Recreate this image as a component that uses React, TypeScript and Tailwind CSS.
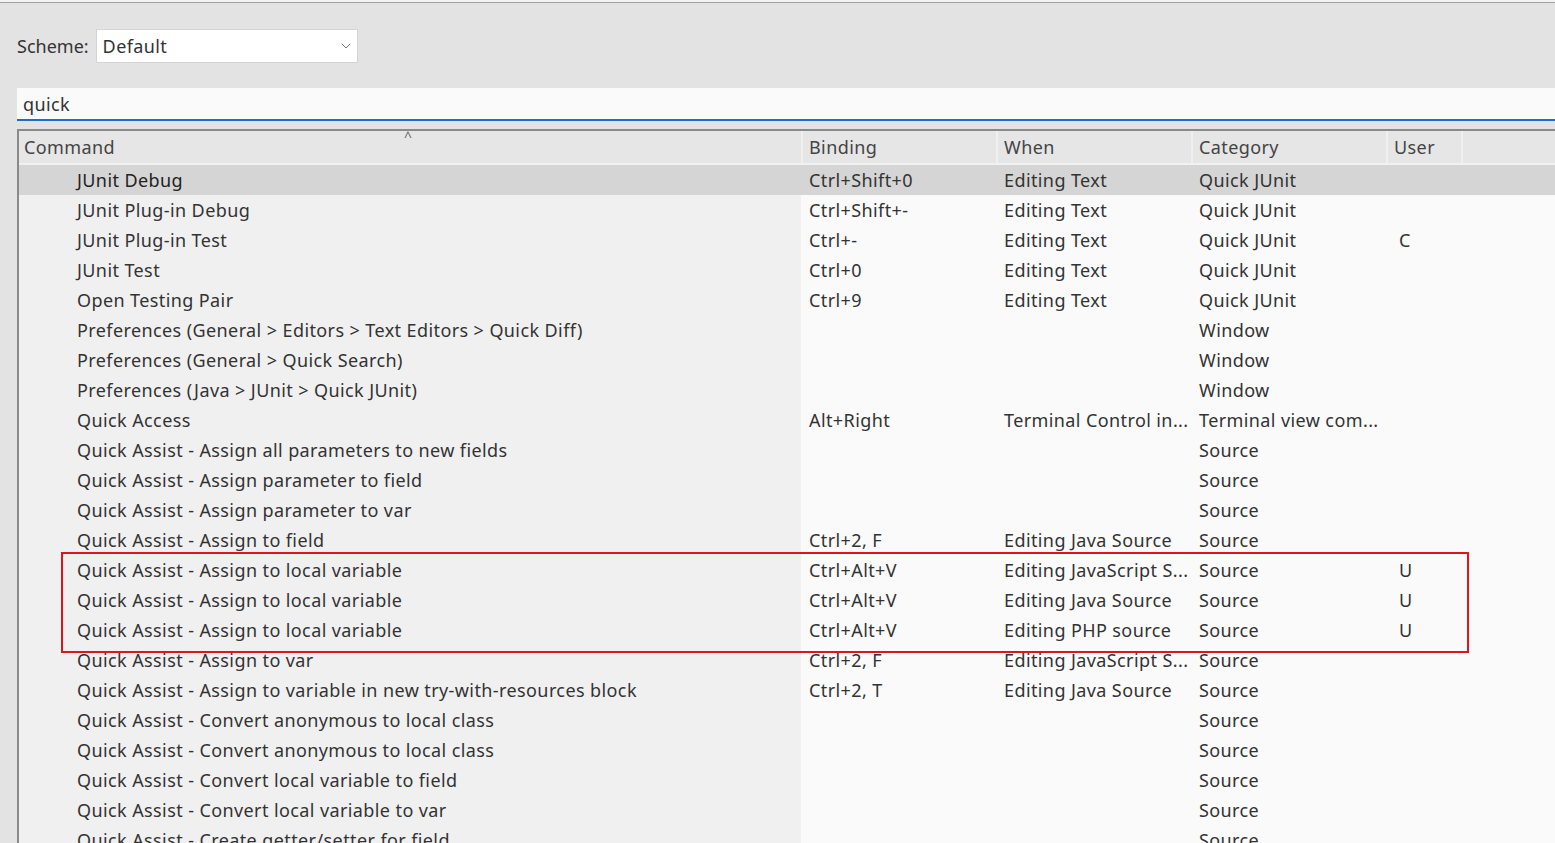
import { ChevronDown } from "lucide-react"

interface Row {
  command: string
  binding?: string
  when?: string
  category: string
  user?: string
}

const rows: Row[] = [
  { command: "JUnit Debug", binding: "Ctrl+Shift+0", when: "Editing Text", category: "Quick JUnit" },
  { command: "JUnit Plug-in Debug", binding: "Ctrl+Shift+-", when: "Editing Text", category: "Quick JUnit" },
  { command: "JUnit Plug-in Test", binding: "Ctrl+-", when: "Editing Text", category: "Quick JUnit", user: "C" },
  { command: "JUnit Test", binding: "Ctrl+0", when: "Editing Text", category: "Quick JUnit" },
  { command: "Open Testing Pair", binding: "Ctrl+9", when: "Editing Text", category: "Quick JUnit" },
  { command: "Preferences (General > Editors > Text Editors > Quick Diff)", category: "Window" },
  { command: "Preferences (General > Quick Search)", category: "Window" },
  { command: "Preferences (Java > JUnit > Quick JUnit)", category: "Window" },
  { command: "Quick Access", binding: "Alt+Right", when: "Terminal Control in...", category: "Terminal view com..." },
  { command: "Quick Assist - Assign all parameters to new fields", category: "Source" },
  { command: "Quick Assist - Assign parameter to field", category: "Source" },
  { command: "Quick Assist - Assign parameter to var", category: "Source" },
  { command: "Quick Assist - Assign to field", binding: "Ctrl+2, F", when: "Editing Java Source", category: "Source" },
  { command: "Quick Assist - Assign to local variable", binding: "Ctrl+Alt+V", when: "Editing JavaScript S...", category: "Source", user: "U" },
  { command: "Quick Assist - Assign to local variable", binding: "Ctrl+Alt+V", when: "Editing Java Source", category: "Source", user: "U" },
  { command: "Quick Assist - Assign to local variable", binding: "Ctrl+Alt+V", when: "Editing PHP source", category: "Source", user: "U" },
  { command: "Quick Assist - Assign to var", binding: "Ctrl+2, F", when: "Editing JavaScript S...", category: "Source" },
  { command: "Quick Assist - Assign to variable in new try-with-resources block", binding: "Ctrl+2, T", when: "Editing Java Source", category: "Source" },
  { command: "Quick Assist - Convert anonymous to local class", category: "Source" },
  { command: "Quick Assist - Convert anonymous to local class", category: "Source" },
  { command: "Quick Assist - Convert local variable to field", category: "Source" },
  { command: "Quick Assist - Convert local variable to var", category: "Source" },
  { command: "Quick Assist - Create getter/setter for field", category: "Source" },
]

const cols = "grid grid-cols-[782px_195px_195px_195px_75px_1fr]"

export default function App() {
  return (
    <div
      className="h-[843px] w-[1555px] overflow-hidden bg-[#e3e3e3] text-[18px] tracking-[0.4px] text-[#333333]"
      style={{ fontFamily: '"Noto Sans", "Open Sans", sans-serif' }}
    >
      <div className="h-[2px] bg-[#f4f4f4]" />
      <div className="h-px bg-[#a3a3a3]" />

      {/* Scheme */}
      <div className="flex items-center pl-[17px] pt-[26px]">
        <span className="leading-none tracking-normal">Scheme:</span>
        <div className="ml-[7px] flex h-[34px] w-[262px] items-center justify-between border border-[#d4d4d4] bg-white pl-[6px] pr-[3px]">
          <span className="leading-none">Default</span>
          <ChevronDown className="h-[16px] w-[16px] text-[#777]" strokeWidth={1.5} />
        </div>
      </div>

      {/* Filter */}
      <div className="ml-[17px] mt-[25px] flex h-[33px] items-center border-b-2 border-[#1a6fc9] bg-[#fafafa] pl-[6px]">
        <span className="leading-none">quick</span>
      </div>

      {/* Table */}
      <div className="relative ml-[17px] mt-[8px] border-l-2 border-t-2 border-[#8a8a8a]">
        <div className={`${cols} h-[34px] border-b-2 border-[#f2f2f2] bg-[#e6e6e6] text-[#444]`}>
          <div className="relative flex items-center pl-[5px]">
            Command
            <span className="absolute left-[385px] top-[-5px] text-[14px] text-[#666]">^</span>
          </div>
          <div className="flex items-center border-l-2 border-[#f0f0f0] pl-[6px]">Binding</div>
          <div className="flex items-center border-l-2 border-[#f0f0f0] pl-[6px]">When</div>
          <div className="flex items-center border-l-2 border-[#f0f0f0] pl-[6px]">Category</div>
          <div className="flex items-center border-l-2 border-[#f0f0f0] pl-[6px]">User</div>
          <div className="border-l-2 border-[#f0f0f0]" />
        </div>

        {rows.map((r, i) => {
          const selected = i === 0
          const cell = selected ? "bg-[#d5d5d5]" : "bg-[#fafafa]"
          return (
            <div key={i} className={`${cols} h-[30px] whitespace-nowrap`}>
              <div className={`flex items-center pl-[58px] ${selected ? "bg-[#d5d5d5] text-[#222]" : "bg-[#f0f0f0]"}`}>
                {r.command}
              </div>
              <div className={`flex items-center pl-[8px] ${cell}`}>{r.binding}</div>
              <div className={`flex items-center pl-[8px] ${cell}`}>{r.when}</div>
              <div className={`flex items-center pl-[8px] ${cell}`}>{r.category}</div>
              <div className={`flex items-center pl-[13px] ${cell}`}>{r.user}</div>
              <div className={cell} />
            </div>
          )
        })}

        {/* highlight box */}
        <div className="pointer-events-none absolute left-[42px] top-[421px] h-[101px] w-[1408px] border-2 border-[#e0141e]" />
      </div>
    </div>
  )
}
